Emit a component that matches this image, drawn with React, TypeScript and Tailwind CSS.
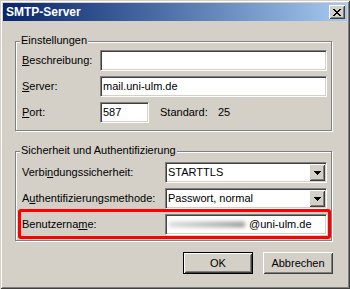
import React from "react";

const sunken =
  "border border-t-[#808080] border-l-[#808080] border-b-white border-r-white shadow-[inset_1px_1px_#404040,inset_-1px_-1px_#d4d0c8] bg-white";
const raised =
  "bg-[#d4d0c8] shadow-[inset_1px_1px_#fff,inset_-1px_-1px_#404040,inset_2px_2px_#d4d0c8,inset_-2px_-2px_#808080]";

function CloseGlyph() {
  const rows = [
    "11....11",
    ".11..11.",
    "..1111..",
    "...11...",
    "..1111..",
    ".11..11.",
    "11....11",
  ];
  const rects: React.ReactNode[] = [];
  rows.forEach((r, y) =>
    r.split("").forEach((c, x) => {
      if (c === "1") rects.push(<rect key={`${x}-${y}`} x={x} y={y} width={1} height={1} fill="#000" />);
    })
  );
  return (
    <svg width="8" height="7" viewBox="0 0 8 7" shapeRendering="crispEdges">
      {rects}
    </svg>
  );
}

function Arrow() {
  return (
    <svg width="7" height="4" viewBox="0 0 7 4" shapeRendering="crispEdges">
      <rect x="0" y="0" width="7" height="1" fill="#000" />
      <rect x="1" y="1" width="5" height="1" fill="#000" />
      <rect x="2" y="2" width="3" height="1" fill="#000" />
      <rect x="3" y="3" width="1" height="1" fill="#000" />
    </svg>
  );
}

function Combo({ value }: { value: string }) {
  return (
    <div className={`${sunken} h-[21px] flex-1 flex p-[1px]`}>
      <div className="flex-1 flex items-center pl-[1px]">{value}</div>
      <div className={`${raised} w-[16px] flex items-center justify-center`}>
        <Arrow />
      </div>
    </div>
  );
}

export default function App() {
  return (
    <div className="w-[350px] h-[289px] bg-[#d4d0c8] p-[3px] flex flex-col text-[11px] leading-[13px] text-black font-['Liberation_Sans',Arial,sans-serif] shadow-[inset_1px_1px_#d4d0c8,inset_-1px_-1px_#404040,inset_2px_2px_#fff,inset_-2px_-2px_#808080]">
      {/* Title bar */}
      <div className="h-[18px] flex items-center justify-between pl-[3px] pr-[2px] bg-linear-to-r from-[#0a246a] to-[#a6caf0]">
        <span className="text-white font-bold text-[12px]">SMTP-Server</span>
        <div className={`${raised} w-[16px] h-[14px] flex items-center justify-center`}>
          <CloseGlyph />
        </div>
      </div>

      <div className="pl-[12px] pt-[20px] flex flex-col">
        {/* Group 1 */}
        <div className="relative w-[317px] h-[90px] border border-[#808080] shadow-[inset_1px_1px_#fff,1px_1px_#fff] pt-[8px] pl-[6px] pr-[4px] flex flex-col gap-[5px]">
          <span className="absolute left-[4px] top-[-8px] bg-[#d4d0c8] px-[1px]">Einstellungen</span>
          <div className="flex items-center h-[21px]">
            <span className="w-[78px]">
              <u>B</u>eschreibung:
            </span>
            <div className={`${sunken} h-[21px] flex-1`} />
          </div>
          <div className="flex items-center h-[21px]">
            <span className="w-[78px]">
              <u>S</u>erver:
            </span>
            <div className={`${sunken} h-[21px] flex-1 flex items-center pl-[2px]`}>mail.uni-ulm.de</div>
          </div>
          <div className="flex items-center h-[21px]">
            <span className="w-[78px]">
              <u>P</u>ort:
            </span>
            <div className={`${sunken} h-[21px] w-[49px] flex items-center pl-[2px]`}>587</div>
            <span className="ml-[11px] w-[58px]">Standard:</span>
            <span>25</span>
          </div>
        </div>

        {/* Group 2 */}
        <div className="relative mt-[20px] w-[317px] h-[90px] border border-[#808080] shadow-[inset_1px_1px_#fff,1px_1px_#fff] pt-[10px] pl-[6px] pr-[4px] flex flex-col">
          <span className="absolute left-[4px] top-[-8px] bg-[#d4d0c8] px-[1px]">Sicherheit und Authentifizierung</span>
          <div className="flex items-center h-[21px]">
            <span className="w-[143px]">
              Verbi<u>n</u>dungssicherheit:
            </span>
            <Combo value="STARTTLS" />
          </div>
          <div className="flex items-center h-[21px] mt-[5px]">
            <span className="w-[143px]">
              A<u>u</u>thentifizierungsmethode:
            </span>
            <Combo value="Passwort, normal" />
          </div>
          <div className="ml-[-4px] mr-[-4px] mt-[0px] h-[30px] border-[3px] border-[#ff0000] rounded-[3px] flex items-center pl-[1px] pr-[1px]">
            <span className="w-[143px]">
              Benutzerna<u>m</u>e:
            </span>
            <div className={`${sunken} h-[21px] flex-1 flex items-center pl-[3px]`}>
              <div className="w-[80px] h-[8px] flex items-center">
                <div className="w-[76px] h-[5px] blur-[2px] bg-linear-to-r from-[#d8d8d8] via-[#b4b4b4] to-[#8c8c8c]" />
              </div>
              <span>@uni-ulm.de</span>
            </div>
          </div>
        </div>

        {/* Buttons */}
        <div className="mt-[11px] w-[318px] flex justify-end gap-[10px]">
          <div className="w-[70px] h-[22px] border border-black">
            <div className={`${raised} w-full h-full flex items-center justify-center`}>OK</div>
          </div>
          <div className={`${raised} w-[70px] h-[22px] flex items-center justify-center`}>Abbrechen</div>
        </div>
      </div>
    </div>
  );
}
